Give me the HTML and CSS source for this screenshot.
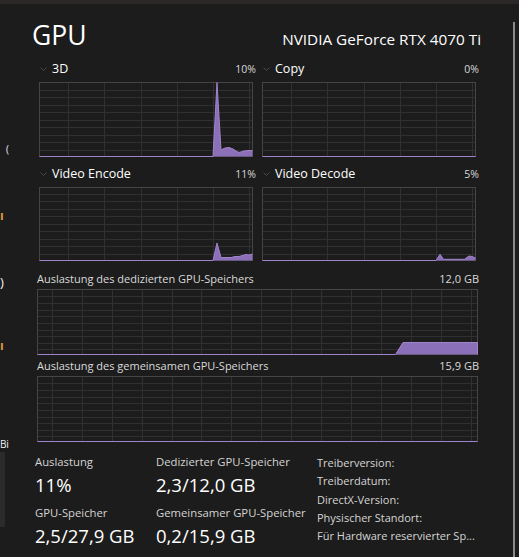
FILE: index.html
```html
<!DOCTYPE html>
<html lang="de">
<head>
<meta charset="utf-8">
<title>GPU</title>
<link rel="stylesheet" href="styles.css">
</head>
<body>
<div class="topbar"></div>
<div class="app">
  <aside class="sidebar">
    <div class="frag f1">(</div>
    <div class="frag f2">ı</div>
    <div class="frag f3">)</div>
    <div class="frag f4">ı</div>
    <div class="frag f5">Bi</div>
    <div class="sel"></div>
  </aside>

  <main class="main">
    <header class="head">
      <h1 class="title">GPU</h1>
      <div class="model">NVIDIA GeForce RTX 4070 Ti</div>
    </header>

    <section class="engines">
      <div class="engine">
        <div class="engine-head">
          <svg class="chev" width="7" height="4" viewBox="0 0 7 4"><polyline points="0.5,0.5 3.5,3.5 6.5,0.5"/></svg>
          <span class="engine-name">3D</span>
          <span class="pct">10%</span>
        </div>
        <svg class="chart" width="214" height="75" viewBox="0 0 214 75">
          <rect class="frame" x="0.5" y="0.5" width="213" height="74"/>
          <path class="grid" d="M29.5 1V74M65.5 1V74M102.5 1V74M138.5 1V74M174.5 1V74M210.5 1V74M1 8.5H213M1 15.5H213M1 23.5H213M1 30.5H213M1 38.5H213M1 45.5H213M1 53.5H213M1 60.5H213M1 68.5H213"/>
          <path class="area" d="M174 74.5L178 0.5L182 68L186 66L190 65.5L194 67L197 69L200 70.5L205 69L210 68.5L213.5 68.5V74.5Z"/>
          <path class="line" d="M0.5 74.5H174L178 0.5L182 68L186 66L190 65.5L194 67L197 69L200 70.5L205 69L210 68.5L213.5 68.5"/>
        </svg>
      </div>

      <div class="engine">
        <div class="engine-head">
          <svg class="chev" width="7" height="4" viewBox="0 0 7 4"><polyline points="0.5,0.5 3.5,3.5 6.5,0.5"/></svg>
          <span class="engine-name">Copy</span>
          <span class="pct">0%</span>
        </div>
        <svg class="chart" width="214" height="75" viewBox="0 0 214 75">
          <rect class="frame" x="0.5" y="0.5" width="213" height="74"/>
          <path class="grid" d="M29.5 1V74M65.5 1V74M102.5 1V74M138.5 1V74M174.5 1V74M210.5 1V74M1 8.5H213M1 15.5H213M1 23.5H213M1 30.5H213M1 38.5H213M1 45.5H213M1 53.5H213M1 60.5H213M1 68.5H213"/>
          <path class="line" d="M0.5 74.5H213.5"/>
        </svg>
      </div>

      <div class="engine">
        <div class="engine-head">
          <svg class="chev" width="7" height="4" viewBox="0 0 7 4"><polyline points="0.5,0.5 3.5,3.5 6.5,0.5"/></svg>
          <span class="engine-name">Video Encode</span>
          <span class="pct">11%</span>
        </div>
        <svg class="chart" width="214" height="74" viewBox="0 0 214 74">
          <rect class="frame" x="0.5" y="0.5" width="213" height="73"/>
          <path class="grid" d="M29.5 1V73M65.5 1V73M102.5 1V73M138.5 1V73M174.5 1V73M210.5 1V73M1 7.5H213M1 14.5H213M1 22.5H213M1 29.5H213M1 37.5H213M1 44.5H213M1 52.5H213M1 59.5H213M1 67.5H213"/>
          <path class="area" d="M174 73.5L178 56L182 70.5L192 70.5L196 69.5L200 69.5L207 67.5L210 68L213.5 67V73.5Z"/>
          <path class="line" d="M0.5 73.5H174L178 56L182 70.5L192 70.5L196 69.5L200 69.5L207 67.5L210 68L213.5 67"/>
        </svg>
      </div>

      <div class="engine">
        <div class="engine-head">
          <svg class="chev" width="7" height="4" viewBox="0 0 7 4"><polyline points="0.5,0.5 3.5,3.5 6.5,0.5"/></svg>
          <span class="engine-name">Video Decode</span>
          <span class="pct">5%</span>
        </div>
        <svg class="chart" width="214" height="74" viewBox="0 0 214 74">
          <rect class="frame" x="0.5" y="0.5" width="213" height="73"/>
          <path class="grid" d="M29.5 1V73M65.5 1V73M102.5 1V73M138.5 1V73M174.5 1V73M210.5 1V73M1 7.5H213M1 14.5H213M1 22.5H213M1 29.5H213M1 37.5H213M1 44.5H213M1 52.5H213M1 59.5H213M1 67.5H213"/>
          <path class="area" d="M174 73.5L178 67.3L181.5 72.3L202.5 72.3L207 69L210 69.5L213.5 71V73.5Z"/>
          <path class="line" d="M0.5 73.5H174L178 67.3L181.5 72.3L202.5 72.3L207 69L210 69.5L213.5 71"/>
        </svg>
      </div>
    </section>

    <section class="mem mem-first">
      <div class="mem-head"><span>Auslastung des dedizierten GPU-Speichers</span><span>12,0 GB</span></div>
      <svg class="chart" width="442" height="66" viewBox="0 0 442 66">
        <rect class="frame" x="0.5" y="0.5" width="440" height="65"/>
        <path class="grid" d="M15.5 1V65M45.5 1V65M75.5 1V65M105.5 1V65M135.5 1V65M164.5 1V65M194.5 1V65M224.5 1V65M254.5 1V65M284.5 1V65M314.5 1V65M344.5 1V65M374.5 1V65M404.5 1V65M434.5 1V65M1 7.5H440M1 14.5H440M1 21.5H440M1 27.5H440M1 34.5H440M1 41.5H440M1 47.5H440M1 54.5H440M1 60.5H440"/>
        <path class="area" d="M358.5 65.5L366 53.5H440.5V65.5Z"/>
        <path class="line" d="M0.5 65.5H358.5L366 53.5H440.5V65.5"/>
      </svg>
    </section>

    <section class="mem">
      <div class="mem-head"><span>Auslastung des gemeinsamen GPU-Speichers</span><span>15,9 GB</span></div>
      <svg class="chart" width="442" height="66" viewBox="0 0 442 66">
        <rect class="frame" x="0.5" y="0.5" width="440" height="65"/>
        <path class="grid" d="M15.5 1V65M45.5 1V65M75.5 1V65M105.5 1V65M135.5 1V65M164.5 1V65M194.5 1V65M224.5 1V65M254.5 1V65M284.5 1V65M314.5 1V65M344.5 1V65M374.5 1V65M404.5 1V65M434.5 1V65M1 7.5H440M1 14.5H440M1 21.5H440M1 27.5H440M1 34.5H440M1 41.5H440M1 47.5H440M1 54.5H440M1 60.5H440"/>
        <path class="line" d="M0.5 65.5H440.5"/>
      </svg>
    </section>

    <section class="stats">
      <div class="stat-col">
        <div class="stat-label">Auslastung</div>
        <div class="stat-value">11%</div>
        <div class="stat-label second">GPU-Speicher</div>
        <div class="stat-value">2,5/27,9 GB</div>
      </div>
      <div class="stat-col">
        <div class="stat-label">Dedizierter GPU-Speicher</div>
        <div class="stat-value">2,3/12,0 GB</div>
        <div class="stat-label second">Gemeinsamer GPU-Speicher</div>
        <div class="stat-value">0,2/15,9 GB</div>
      </div>
      <ul class="props">
        <li>Treiberversion:</li>
        <li>Treiberdatum:</li>
        <li>DirectX-Version:</li>
        <li>Physischer Standort:</li>
        <li>Für Hardware reservierter Sp...</li>
      </ul>
    </section>
  </main>

  <div class="scroll"></div>
</div>
</body>
</html>
```

FILE: styles.css
```css
* { box-sizing: border-box; }

html, body {
  margin: 0;
  padding: 0;
  width: 519px;
  height: 557px;
  overflow: hidden;
  background: #1c1c1c;
}

body {
  font-family: "Open Sans", "Noto Sans", sans-serif;
  color: #ffffff;
}

.topbar {
  height: 4px;
  background: #2c2727;
}

.app {
  display: flex;
  height: 553px;
}

/* clipped sidebar on the far left */
.sidebar {
  width: 9px;
  flex: none;
  overflow: hidden;
  display: flex;
  flex-direction: column;
}

.frag {
  white-space: nowrap;
  font-size: 11px;
  line-height: 14px;
  height: 14px;
}

.f1 { margin-top: 138px; text-align: right; color: #e4ecff; font-size: 10px; }
.f2 { margin-top: 53px; color: #e39a3a; font-size: 12px; font-weight: 700; }
.f3 { margin-top: 51px; color: #f2f2f2; font-size: 13px; line-height: 16px; height: 16px; }
.f4 { margin-top: 49px; color: #e39a3a; font-size: 12px; font-weight: 700; }
.f5 { margin-top: 84px; color: #f2f2f2; font-size: 10px; letter-spacing: -0.3px; }

.sel {
  margin-top: 1px;
  width: 5px;
  height: 75px;
  background: #2b2b2b;
}

/* main column */
.main {
  width: 442px;
  margin-left: 28px;
  flex: none;
  display: flex;
  flex-direction: column;
}

.head {
  margin-top: 15px;
  height: 32px;
  display: flex;
  align-items: baseline;
  justify-content: space-between;
}

.title {
  margin: 0 0 0 -5px;
  font-size: 26.5px;
  font-weight: 400;
  line-height: 32px;
}

.model {
  margin-right: -2px;
  font-size: 15.3px;
  line-height: 20px;
}

.engines {
  margin-top: 8px;
  margin-left: 2px;
  display: grid;
  grid-template-columns: 217px 217px;
  column-gap: 6px;
  row-gap: 7px;
}

.engine {
  display: flex;
  flex-direction: column;
}

.engine-head {
  height: 20px;
  display: flex;
  align-items: baseline;
  margin-bottom: 3px;
}

.chev {
  align-self: center;
  margin-left: 1px;
  margin-right: 5px;
  flex: none;
}

.chev polyline {
  fill: none;
  stroke: #4a4a4a;
  stroke-width: 1;
}

.engine-name {
  font-size: 12.5px;
  line-height: 20px;
  color: #ffffff;
}

.pct {
  margin-left: auto;
  font-size: 10.5px;
  color: #d8d8d8;
}

.chart {
  display: block;
}

.frame {
  fill: none;
  stroke: #454545;
  stroke-width: 1;
}

.grid {
  fill: none;
  stroke: #303030;
  stroke-width: 1;
  shape-rendering: crispEdges;
}

.area {
  fill: #8c6fb9;
}

.line {
  fill: none;
  stroke: #9f84cc;
  stroke-width: 1;
}

.mem {
  margin-top: 3px;
}

.mem-first {
  margin-top: 10px;
}

.mem-head {
  height: 16px;
  margin-bottom: 2px;
  display: flex;
  justify-content: space-between;
  align-items: baseline;
  font-size: 11px;
  line-height: 16px;
  color: #dadada;
}

.stats {
  margin-top: 11px;
  margin-left: -2px;
  display: grid;
  grid-template-columns: 121px 161px 1fr;
}

.stat-label {
  font-size: 11.3px;
  line-height: 18px;
  color: #d4d4d4;
  white-space: nowrap;
}

.stat-label.second {
  margin-top: 5px;
}

.stat-value {
  font-size: 18.5px;
  line-height: 28px;
  color: #ffffff;
  white-space: nowrap;
}

.props {
  list-style: none;
  margin: 0;
  padding: 1px 0 0;
  font-size: 11px;
  line-height: 18.3px;
  color: #d4d4d4;
  white-space: nowrap;
}

.scroll {
  width: 2px;
  margin-left: 34px;
  margin-top: 18px;
  background: #8a8a8a;
  flex: none;
}
```
